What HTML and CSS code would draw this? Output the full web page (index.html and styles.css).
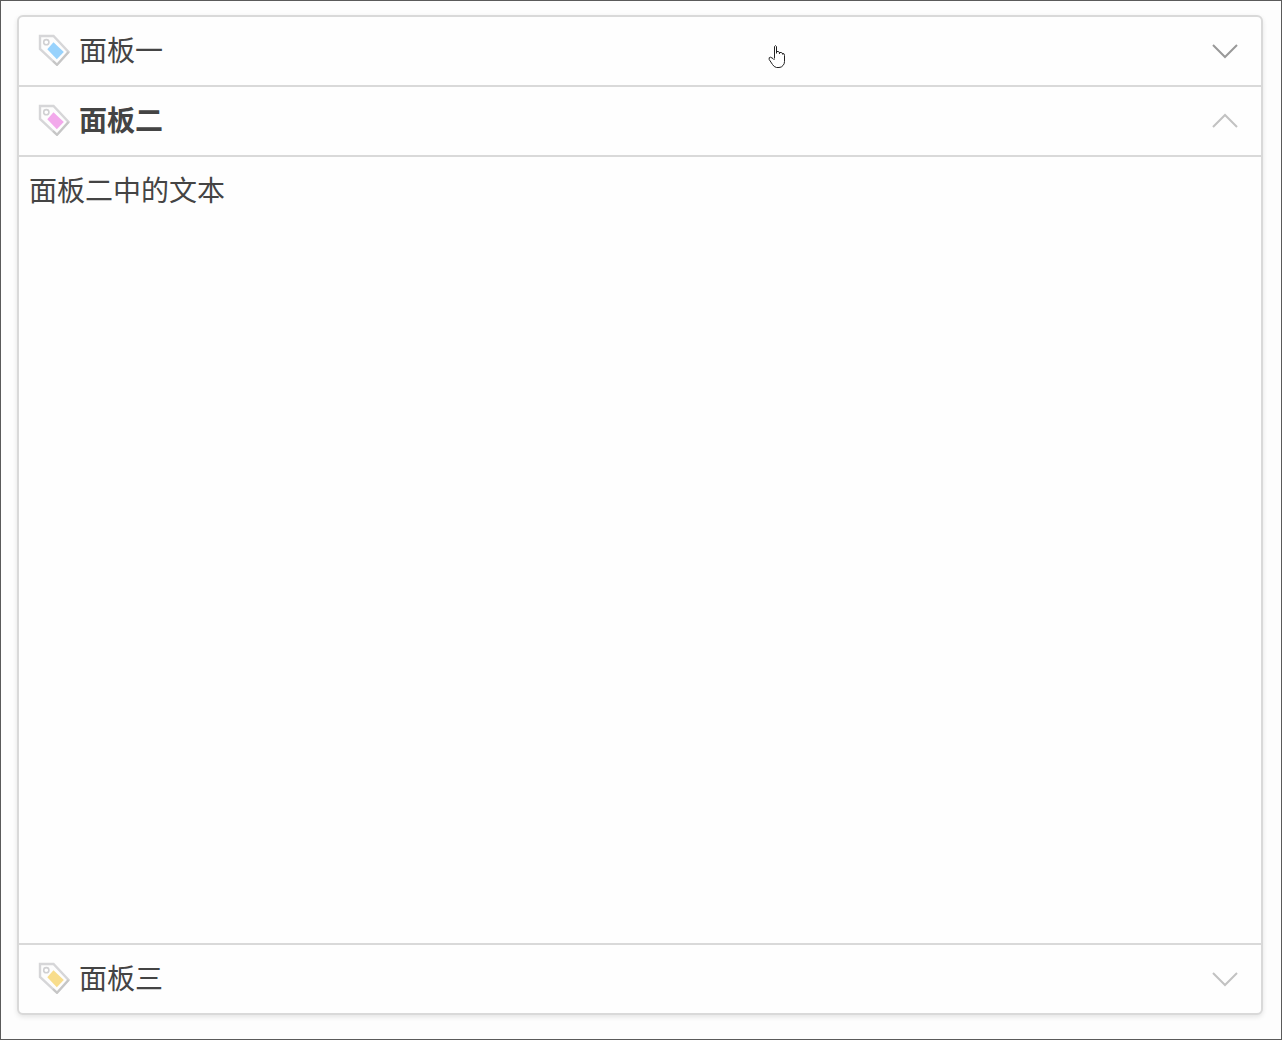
FILE: index.html
```html
<!DOCTYPE html>
<html lang="zh-CN">
<head>
    <meta charset="UTF-8">
    <meta name="viewport" content="width=device-width, initial-scale=1.0">
    <title>折叠面板</title>
    <link rel="stylesheet" href="styles.css">
</head>
<body>
    <!-- Shared tag icon, the label colour comes from currentColor -->
    <svg class="sprite">
        <symbol id="tag" viewBox="0 0 32 32">
            <path d="M2 2H15.5L30.5 18 19 30.8 2 15Z" fill="#fdfdfd" stroke="#d6d6d8" stroke-width="2.4"/>
            <path d="M30.5 18L19 30.8 15 27" fill="none" stroke="#c6c6c6" stroke-width="2"/>
            <circle cx="8.3" cy="8.2" r="2.6" fill="#fff" stroke="#d0d0d2" stroke-width="1.6"/>
            <path d="M15.5 8.2L25.8 18 18.8 25.2 9.3 15.3Z" fill="currentColor"/>
        </symbol>
    </svg>

    <div class="accordion">
        <div class="panel">
            <div class="panel-header">
                <svg class="tag tag-blue"><use href="#tag"/></svg>
                <span class="panel-title">面板一</span>
                <svg class="arrow arrow-hover" viewBox="0 0 26 16"><path d="M1 2L13 14 25 2"/></svg>
            </div>
        </div>
        <div class="panel active">
            <div class="panel-header">
                <svg class="tag tag-pink"><use href="#tag"/></svg>
                <span class="panel-title">面板二</span>
                <svg class="arrow" viewBox="0 0 26 16"><path d="M1 14L13 2 25 14"/></svg>
            </div>
            <div class="panel-body">面板二中的文本</div>
        </div>
        <div class="panel">
            <div class="panel-header">
                <svg class="tag tag-yellow"><use href="#tag"/></svg>
                <span class="panel-title">面板三</span>
                <svg class="arrow" viewBox="0 0 26 16"><path d="M1 2L13 14 25 2"/></svg>
            </div>
        </div>
    </div>

    <svg class="pointer" viewBox="0 0 18 25">
        <path d="M6.5 14.5V2.5Q7.5 .8 8.5 2.5V9.5M8.5 7.5H10.5Q11.5 7.5 11.5 10M11.5 8.5H13.5Q14.5 8.5 14.5 10.5M14.5 9.5Q16.5 9 16.5 11.5V17.5Q16.5 20 15 21.5 13.5 23.5 11 23.5H8.5Q6 23 4.5 20.5L1.2 15.5Q.5 13.2 2.5 13.2L5 14.5 6.5 16"/>
    </svg>
</body>
</html>
```
FILE: styles.css
```css
* {
    box-sizing: border-box;
}
body {
    font-family: "Noto Sans CJK SC", sans-serif;
    font-size: 28px;
    color: #444;
    margin: 0;
    padding: 14px 18px 24px 16px;
    display: flex;
    height: 100vh;
    background-color: #fdfdfd;
    border: 1px solid #5a5a5a;
    overflow: hidden;
}
.sprite {
    display: none;
}
.accordion {
    flex: 1;
    display: flex;
    flex-direction: column;
    background-color: #fefefe;
    border: 2px solid #d9d9d9;
    border-radius: 6px;
    box-shadow: 0 2px 5px rgba(0, 0, 0, 0.1);
}
.panel + .panel {
    border-top: 2px solid #d9d9d9;
}
.panel.active {
    flex: 1;
    display: flex;
    flex-direction: column;
}
.panel-header {
    display: flex;
    align-items: center;
    height: 68px;
    padding: 0 23px 0 19px;
}
.panel-title {
    flex: 1;
    margin-left: 9px;
    padding-bottom: 4px;
    line-height: 64px;
}
.active .panel-title {
    font-weight: bold;
}
.panel-body {
    flex: 1;
    padding: 11px 10px;
    line-height: 42px;
    border-top: 2px solid #d9d9d9;
}

/* Icons */
.tag {
    width: 32px;
    height: 32px;
    margin-bottom: 2px;
}
.tag-blue {
    color: #98d2fc;
}
.tag-pink {
    color: #f2a9eb;
}
.tag-yellow {
    color: #f8dd8c;
}
.arrow {
    width: 26px;
    height: 16px;
    fill: none;
    stroke: #c2c2c2;
    stroke-width: 2;
}
.arrow-hover {
    stroke: #999;
}

/* Mouse pointer over the first header */
.pointer {
    position: absolute;
    left: 768px;
    top: 44px;
    width: 18px;
    height: 25px;
    fill: #fff;
    stroke: #222;
    stroke-width: 1;
}
```
